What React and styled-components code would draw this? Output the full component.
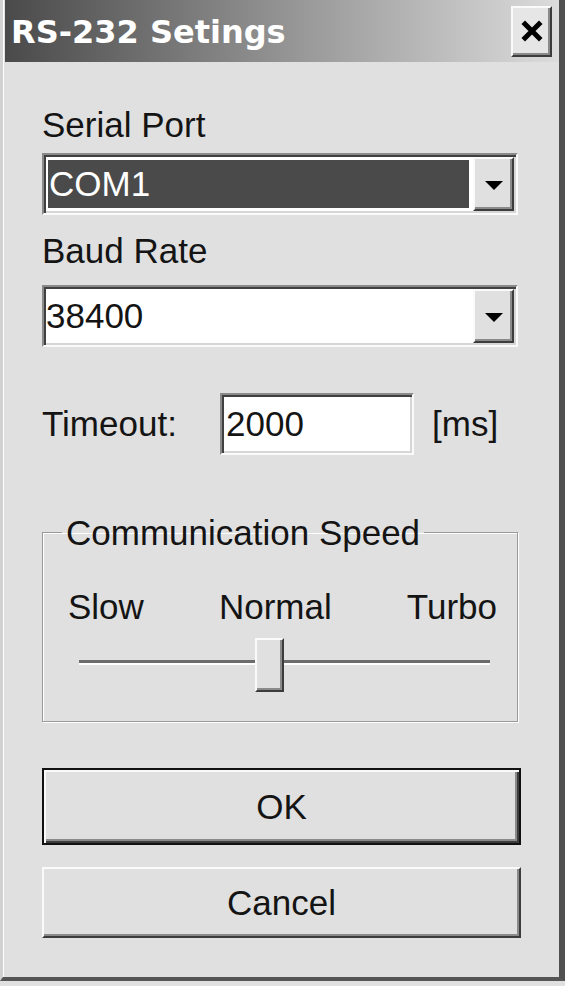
import React from 'react'
import styled, { createGlobalStyle, css } from 'styled-components'

const GlobalStyle = createGlobalStyle`
  html, body {
    margin: 0;
    padding: 0;
    background: #e0e0e0;
  }
  body {
    font-family: "Liberation Sans", Arial, sans-serif;
    color: #141414;
  }
`

const sunken = css`
  box-sizing: border-box;
  border: 2px solid;
  border-color: #8a8a8a #fafafa #fafafa #8a8a8a;
  box-shadow: inset 2px 2px 0 #404040, inset -2px -2px 0 #d6d6d6;
  background: #fff;
`

const raised = css`
  box-sizing: border-box;
  background: #e0e0e0;
  border: 2px solid;
  border-color: #fafafa #3c3c3c #3c3c3c #fafafa;
  box-shadow: inset -2px -2px 0 #8a8a8a;
`

const Screen = styled('div')`
  width: 565px;
  height: 986px;
  background: #e0e0e0;
  overflow: hidden;
`

const Window = styled('div')`
  box-sizing: border-box;
  width: 565px;
  height: 981px;
  display: flex;
  flex-direction: column;
  background: #e0e0e0;
  border-left: 3px solid #d2d2d2;
  border-right: 6px solid #505050;
  border-bottom: 4px solid #555;
  box-shadow: inset 1px 0 0 #fff;
`

const TitleBar = styled('div')`
  height: 62px;
  margin-left: 2px;
  display: flex;
  align-items: center;
  justify-content: space-between;
  padding: 0 7px 0 6px;
  background: linear-gradient(to right, #4a4a4a, #dcdcdc);
`

const Title = styled('span')`
  font-family: "DejaVu Sans", Verdana, sans-serif;
  font-weight: bold;
  font-size: 32px;
  color: #fff;
  margin-top: 2px;
`

const CloseButton = styled('div')`
  ${raised};
  width: 41px;
  height: 51px;
  display: flex;
  align-items: center;
  justify-content: center;
  background: #e6e6e6;
`

const Content = styled('div')`
  display: flex;
  flex-direction: column;
  padding: 43px 41px 0 39px;
`

const Label = styled('div')`
  font-size: 35px;
  line-height: 40px;
  margin-top: ${({ $gap = 0 }) => $gap}px;
`

const Combo = styled('div')`
  ${sunken};
  height: 62px;
  padding: 2px;
  display: flex;
  margin-top: ${({ $gap = 0 }) => $gap}px;
`

const Field = styled('div')`
  flex: 1;
  display: flex;
  align-items: center;
  font-size: 35px;
  padding-left: ${({ $selected }) => ($selected ? 1 : 0)}px;
  ${({ $selected }) => $selected && css`
    margin: 3px 4px 3px 2px;
    background: #4a4a4a;
    color: #fff;
  `};
`

const DropButton = styled('div')`
  ${raised};
  width: 41px;
  display: flex;
  align-items: center;
  justify-content: center;
`

const Arrow = styled('span')`
  width: 0;
  height: 0;
  margin-top: 2px;
  border-left: 9px solid transparent;
  border-right: 9px solid transparent;
  border-top: 9px solid #000;
`

const TimeoutRow = styled('div')`
  display: flex;
  align-items: center;
  margin-top: 46px;
  font-size: 35px;
`

const TimeoutLabel = styled('span')`
  width: 178px;
`

const NumberInput = styled('input')`
  ${sunken};
  width: 194px;
  height: 62px;
  padding: 0 0 0 4px;
  font-family: inherit;
  font-size: 35px;
  color: #141414;
  outline: none;
`

const Unit = styled('span')`
  margin-left: 18px;
`

const Group = styled('fieldset')`
  margin: 60px 0 0 0;
  padding: 0;
  min-inline-size: 0;
  border: 1px solid #9a9a9a;
  box-shadow: 1px 1px 0 #fff, inset 1px 1px 0 #fff;
`

const Legend = styled('legend')`
  margin-left: 19px;
  padding: 0 4px;
  font-size: 35px;
  line-height: 35px;
`

const GroupBody = styled('div')`
  padding: 37px 20px 29px 25px;
`

const SpeedLabels = styled('div')`
  display: flex;
  justify-content: space-between;
  font-size: 35px;
  line-height: 40px;
`

const Slider = styled('div')`
  position: relative;
  box-sizing: border-box;
  height: 54px;
  padding-top: 22px;
  margin: 11px 7px 0 11px;
`

const Track = styled('div')`
  height: 3px;
  background: #6c6c6c;
  border-bottom: 2px solid #fff;
`

const Thumb = styled('div')`
  ${raised};
  position: absolute;
  top: 0;
  width: 29px;
  height: 54px;
`

const Button = styled('button')`
  ${raised};
  width: 479px;
  height: ${({ $default }) => ($default ? 77 : 71)}px;
  margin-top: ${({ $gap = 0 }) => $gap}px;
  font-family: inherit;
  font-size: 35px;
  color: #141414;
  padding: 0;
  ${({ $default }) => $default && css`
    border: 2px solid #111;
    box-shadow: inset 2px 2px 0 #fafafa, inset -2px -2px 0 #3c3c3c, inset -4px -4px 0 #8a8a8a;
  `};
`

const CloseIcon = () => (
  <svg width='22' height='22' viewBox='0 0 22 22'>
    <path d='M4 4 L18 18 M18 4 L4 18' stroke='#000' strokeWidth='5' strokeLinecap='square' />
  </svg>
)

const SLIDER_VALUE = 0.46

const App = () => (
  <Screen>
    <GlobalStyle />
    <Window>
      <TitleBar>
        <Title>RS-232 Setings</Title>
        <CloseButton><CloseIcon /></CloseButton>
      </TitleBar>
      <Content>
        <Label>Serial Port</Label>
        <Combo $gap={8}>
          <Field $selected>COM1</Field>
          <DropButton><Arrow /></DropButton>
        </Combo>
        <Label $gap={16}>Baud Rate</Label>
        <Combo $gap={14}>
          <Field>38400</Field>
          <DropButton><Arrow /></DropButton>
        </Combo>
        <TimeoutRow>
          <TimeoutLabel>Timeout:</TimeoutLabel>
          <NumberInput defaultValue='2000' readOnly />
          <Unit>[ms]</Unit>
        </TimeoutRow>
        <Group>
          <Legend>Communication Speed</Legend>
          <GroupBody>
            <SpeedLabels>
              <span>Slow</span>
              <span>Normal</span>
              <span>Turbo</span>
            </SpeedLabels>
            <Slider>
              <Track />
              <Thumb style={{ left: `calc((100% - 29px) * ${SLIDER_VALUE})` }} />
            </Slider>
          </GroupBody>
        </Group>
        <Button $default $gap={46}>OK</Button>
        <Button $gap={22}>Cancel</Button>
      </Content>
    </Window>
  </Screen>
)

export default App
